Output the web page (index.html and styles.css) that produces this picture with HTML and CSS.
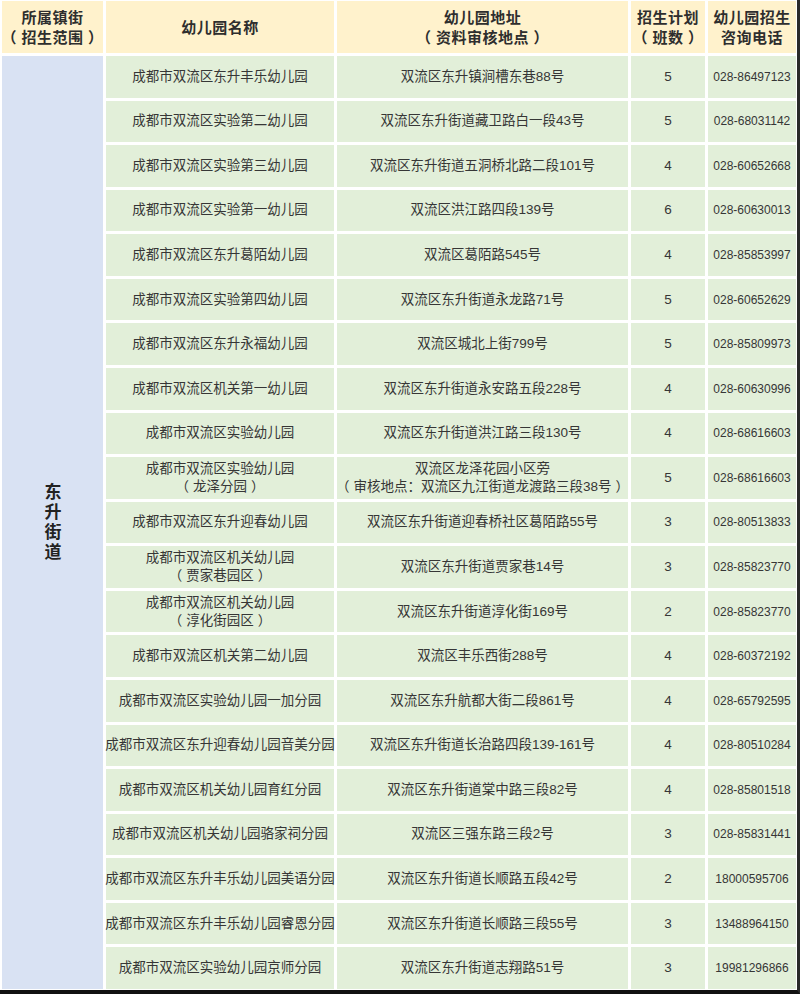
FILE: index.html
```html
<!DOCTYPE html>
<html lang="zh-CN">
<head>
<meta charset="utf-8">
<title>东升街道幼儿园招生</title>
<link rel="stylesheet" href="styles.css">
</head>
<body>
<div class="frame">
  <div class="grid">
    <div class="cell head"><span>所属镇街</span><span><span class="lp">（</span>招生范围<span class="rp">）</span></span></div>
    <div class="cell head">幼儿园名称</div>
    <div class="cell head"><span>幼儿园地址</span><span><span class="lp">（</span>资料审核地点<span class="rp">）</span></span></div>
    <div class="cell head"><span>招生计划</span><span><span class="lp">（</span>班数<span class="rp">）</span></span></div>
    <div class="cell head"><span>幼儿园招生</span><span>咨询电话</span></div>

    <div class="cell area"><span class="vtext">东升街道</span></div>

    <div class="cell">成都市双流区东升丰乐幼儿园</div><div class="cell">双流区东升镇涧槽东巷88号</div><div class="cell">5</div><div class="cell tel">028-86497123</div>
    <div class="cell">成都市双流区实验第二幼儿园</div><div class="cell">双流区东升街道藏卫路白一段43号</div><div class="cell">5</div><div class="cell tel">028-68031142</div>
    <div class="cell">成都市双流区实验第三幼儿园</div><div class="cell">双流区东升街道五洞桥北路二段101号</div><div class="cell">4</div><div class="cell tel">028-60652668</div>
    <div class="cell">成都市双流区实验第一幼儿园</div><div class="cell">双流区洪江路四段139号</div><div class="cell">6</div><div class="cell tel">028-60630013</div>
    <div class="cell">成都市双流区东升葛陌幼儿园</div><div class="cell">双流区葛陌路545号</div><div class="cell">4</div><div class="cell tel">028-85853997</div>
    <div class="cell">成都市双流区实验第四幼儿园</div><div class="cell">双流区东升街道永龙路71号</div><div class="cell">5</div><div class="cell tel">028-60652629</div>
    <div class="cell">成都市双流区东升永福幼儿园</div><div class="cell">双流区城北上街799号</div><div class="cell">5</div><div class="cell tel">028-85809973</div>
    <div class="cell">成都市双流区机关第一幼儿园</div><div class="cell">双流区东升街道永安路五段228号</div><div class="cell">4</div><div class="cell tel">028-60630996</div>
    <div class="cell">成都市双流区实验幼儿园</div><div class="cell">双流区东升街道洪江路三段130号</div><div class="cell">4</div><div class="cell tel">028-68616603</div>
    <div class="cell"><span>成都市双流区实验幼儿园</span><span><span class="lp">（</span>龙泽分园<span class="rp">）</span></span></div><div class="cell"><span>双流区龙泽花园小区旁</span><span><span class="lp">（</span>审核地点：双流区九江街道龙渡路三段38号<span class="rp">）</span></span></div><div class="cell">5</div><div class="cell tel">028-68616603</div>
    <div class="cell">成都市双流区东升迎春幼儿园</div><div class="cell">双流区东升街道迎春桥社区葛陌路55号</div><div class="cell">3</div><div class="cell tel">028-80513833</div>
    <div class="cell"><span>成都市双流区机关幼儿园</span><span><span class="lp">（</span>贾家巷园区<span class="rp">）</span></span></div><div class="cell">双流区东升街道贾家巷14号</div><div class="cell">3</div><div class="cell tel">028-85823770</div>
    <div class="cell"><span>成都市双流区机关幼儿园</span><span><span class="lp">（</span>淳化街园区<span class="rp">）</span></span></div><div class="cell">双流区东升街道淳化街169号</div><div class="cell">2</div><div class="cell tel">028-85823770</div>
    <div class="cell">成都市双流区机关第二幼儿园</div><div class="cell">双流区丰乐西街288号</div><div class="cell">4</div><div class="cell tel">028-60372192</div>
    <div class="cell">成都市双流区实验幼儿园一加分园</div><div class="cell">双流区东升航都大街二段861号</div><div class="cell">4</div><div class="cell tel">028-65792595</div>
    <div class="cell">成都市双流区东升迎春幼儿园音美分园</div><div class="cell">双流区东升街道长治路四段139-161号</div><div class="cell">4</div><div class="cell tel">028-80510284</div>
    <div class="cell">成都市双流区机关幼儿园育红分园</div><div class="cell">双流区东升街道棠中路三段82号</div><div class="cell">4</div><div class="cell tel">028-85801518</div>
    <div class="cell">成都市双流区机关幼儿园骆家祠分园</div><div class="cell">双流区三强东路三段2号</div><div class="cell">3</div><div class="cell tel">028-85831441</div>
    <div class="cell">成都市双流区东升丰乐幼儿园美语分园</div><div class="cell">双流区东升街道长顺路五段42号</div><div class="cell">2</div><div class="cell tel">18000595706</div>
    <div class="cell">成都市双流区东升丰乐幼儿园睿恩分园</div><div class="cell">双流区东升街道长顺路三段55号</div><div class="cell">3</div><div class="cell tel">13488964150</div>
    <div class="cell">成都市双流区实验幼儿园京师分园</div><div class="cell">双流区东升街道志翔路51号</div><div class="cell">3</div><div class="cell tel">19981296866</div>
  </div>
</div>
</body>
</html>
```

FILE: styles.css
```css
html, body {
  margin: 0;
  padding: 0;
  background: #ffffff;
}

.frame {
  box-sizing: border-box;
  width: 800px;
  height: 994px;
  padding: 1px 1px 1px 2px;
  border-right: 3px solid #2a2a2a;
  border-bottom: 4px solid #111111;
  background: #ffffff;
}

.grid {
  display: grid;
  grid-template-columns: 101px 228px 291px 74px 88px;
  grid-template-rows: 52px repeat(21, 1fr);
  gap: 3px;
  height: 100%;
  font-family: "Liberation Sans", "Noto Sans CJK SC", sans-serif;
  font-size: 13.5px;
  line-height: 18px;
  color: #363636;
}

.cell {
  display: flex;
  flex-direction: column;
  align-items: center;
  justify-content: center;
  text-align: center;
  white-space: nowrap;
  background: #e2efd9;
}

.head {
  background: #fff2cc;
  font-family: "Noto Sans CJK SC", sans-serif;
  font-weight: bold;
  font-size: 15px;
  line-height: 20px;
  letter-spacing: 0.5px;
  color: #2e2e2e;
}

.lp {
  margin-right: 0.3em;
}

.rp {
  margin-left: 0.3em;
}

.area {
  grid-column: 1;
  grid-row: 2 / span 21;
  background: #d9e2f3;
  font-family: "Noto Sans CJK SC", sans-serif;
  font-weight: bold;
  font-size: 17px;
  color: #222222;
}

.vtext {
  writing-mode: vertical-rl;
  text-orientation: upright;
  letter-spacing: 3px;
  line-height: 20px;
}

.tel {
  font-size: 12px;
}
```
